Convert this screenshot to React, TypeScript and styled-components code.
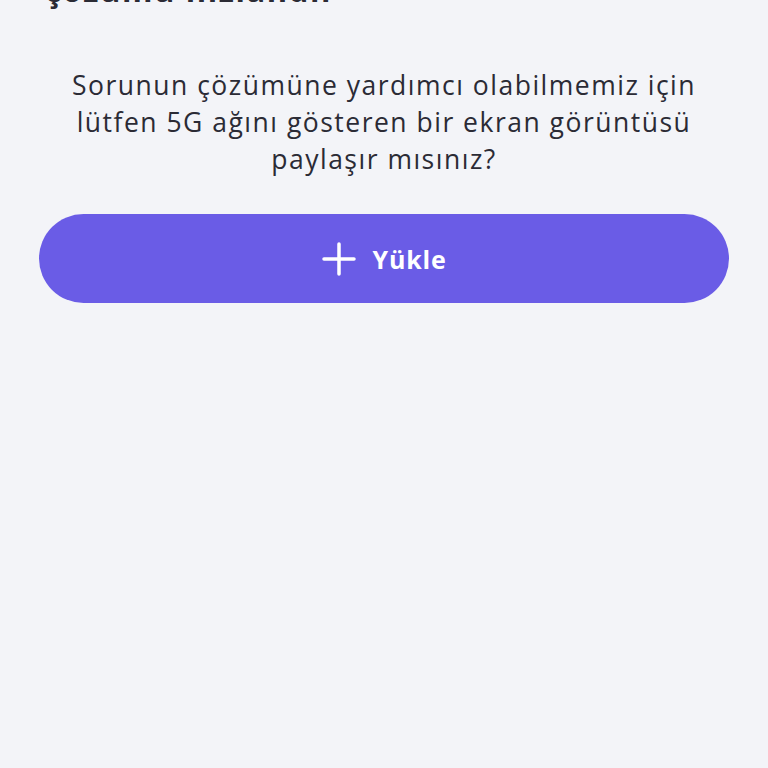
import styled, { createGlobalStyle } from "styled-components";

const GlobalStyle = createGlobalStyle`
  html, body {
    margin: 0;
    padding: 0;
    background: #f3f4f8;
  }
  body {
    font-family: "Open Sans", "Noto Sans", sans-serif;
    color: #2b2b35;
  }
`;

const Page = styled.main`
  min-height: 768px;
  padding: 0 39px;
  box-sizing: border-box;
  display: flex;
  flex-direction: column;
  margin-top: -27px;
`;

const Title = styled.h1`
  margin: 0 0 0 6px;
  font-size: 31px;
  line-height: 34px;
  font-weight: 700;
  letter-spacing: 1.6px;
  color: #2b2b35;
`;

const Question = styled.p`
  margin: 60px 0 0;
  padding: 0 16px;
  font-size: 26.5px;
  line-height: 37px;
  letter-spacing: 1.5px;
  text-align: center;
  font-weight: 400;
  color: #2b2b35;
`;

const UploadButton = styled.button`
  margin-top: 36px;
  height: 89px;
  width: 100%;
  border: none;
  border-radius: 45px;
  background: #6a5ce6;
  color: #ffffff;
  display: flex;
  align-items: center;
  justify-content: center;
  gap: 17px;
  font-family: "Open Sans", "Noto Sans", sans-serif;
  font-size: 25px;
  font-weight: 700;
  letter-spacing: 0.8px;
  cursor: pointer;
`;

const PlusIcon = () => (
  <svg width="34" height="34" viewBox="0 0 34 34" fill="none">
    <path d="M17 2v30M2 17h30" stroke="#fff" strokeWidth="3.5" strokeLinecap="round" />
  </svg>
);

export default function App() {
  return (
    <>
      <GlobalStyle />
      <Page>
        <Title>çözümü hızlandır</Title>
        <Question>
          Sorunun çözümüne yardımcı olabilmemiz için lütfen 5G ağını gösteren
          bir ekran görüntüsü paylaşır mısınız?
        </Question>
        <UploadButton>
          <PlusIcon />
          Yükle
        </UploadButton>
      </Page>
    </>
  );
}
